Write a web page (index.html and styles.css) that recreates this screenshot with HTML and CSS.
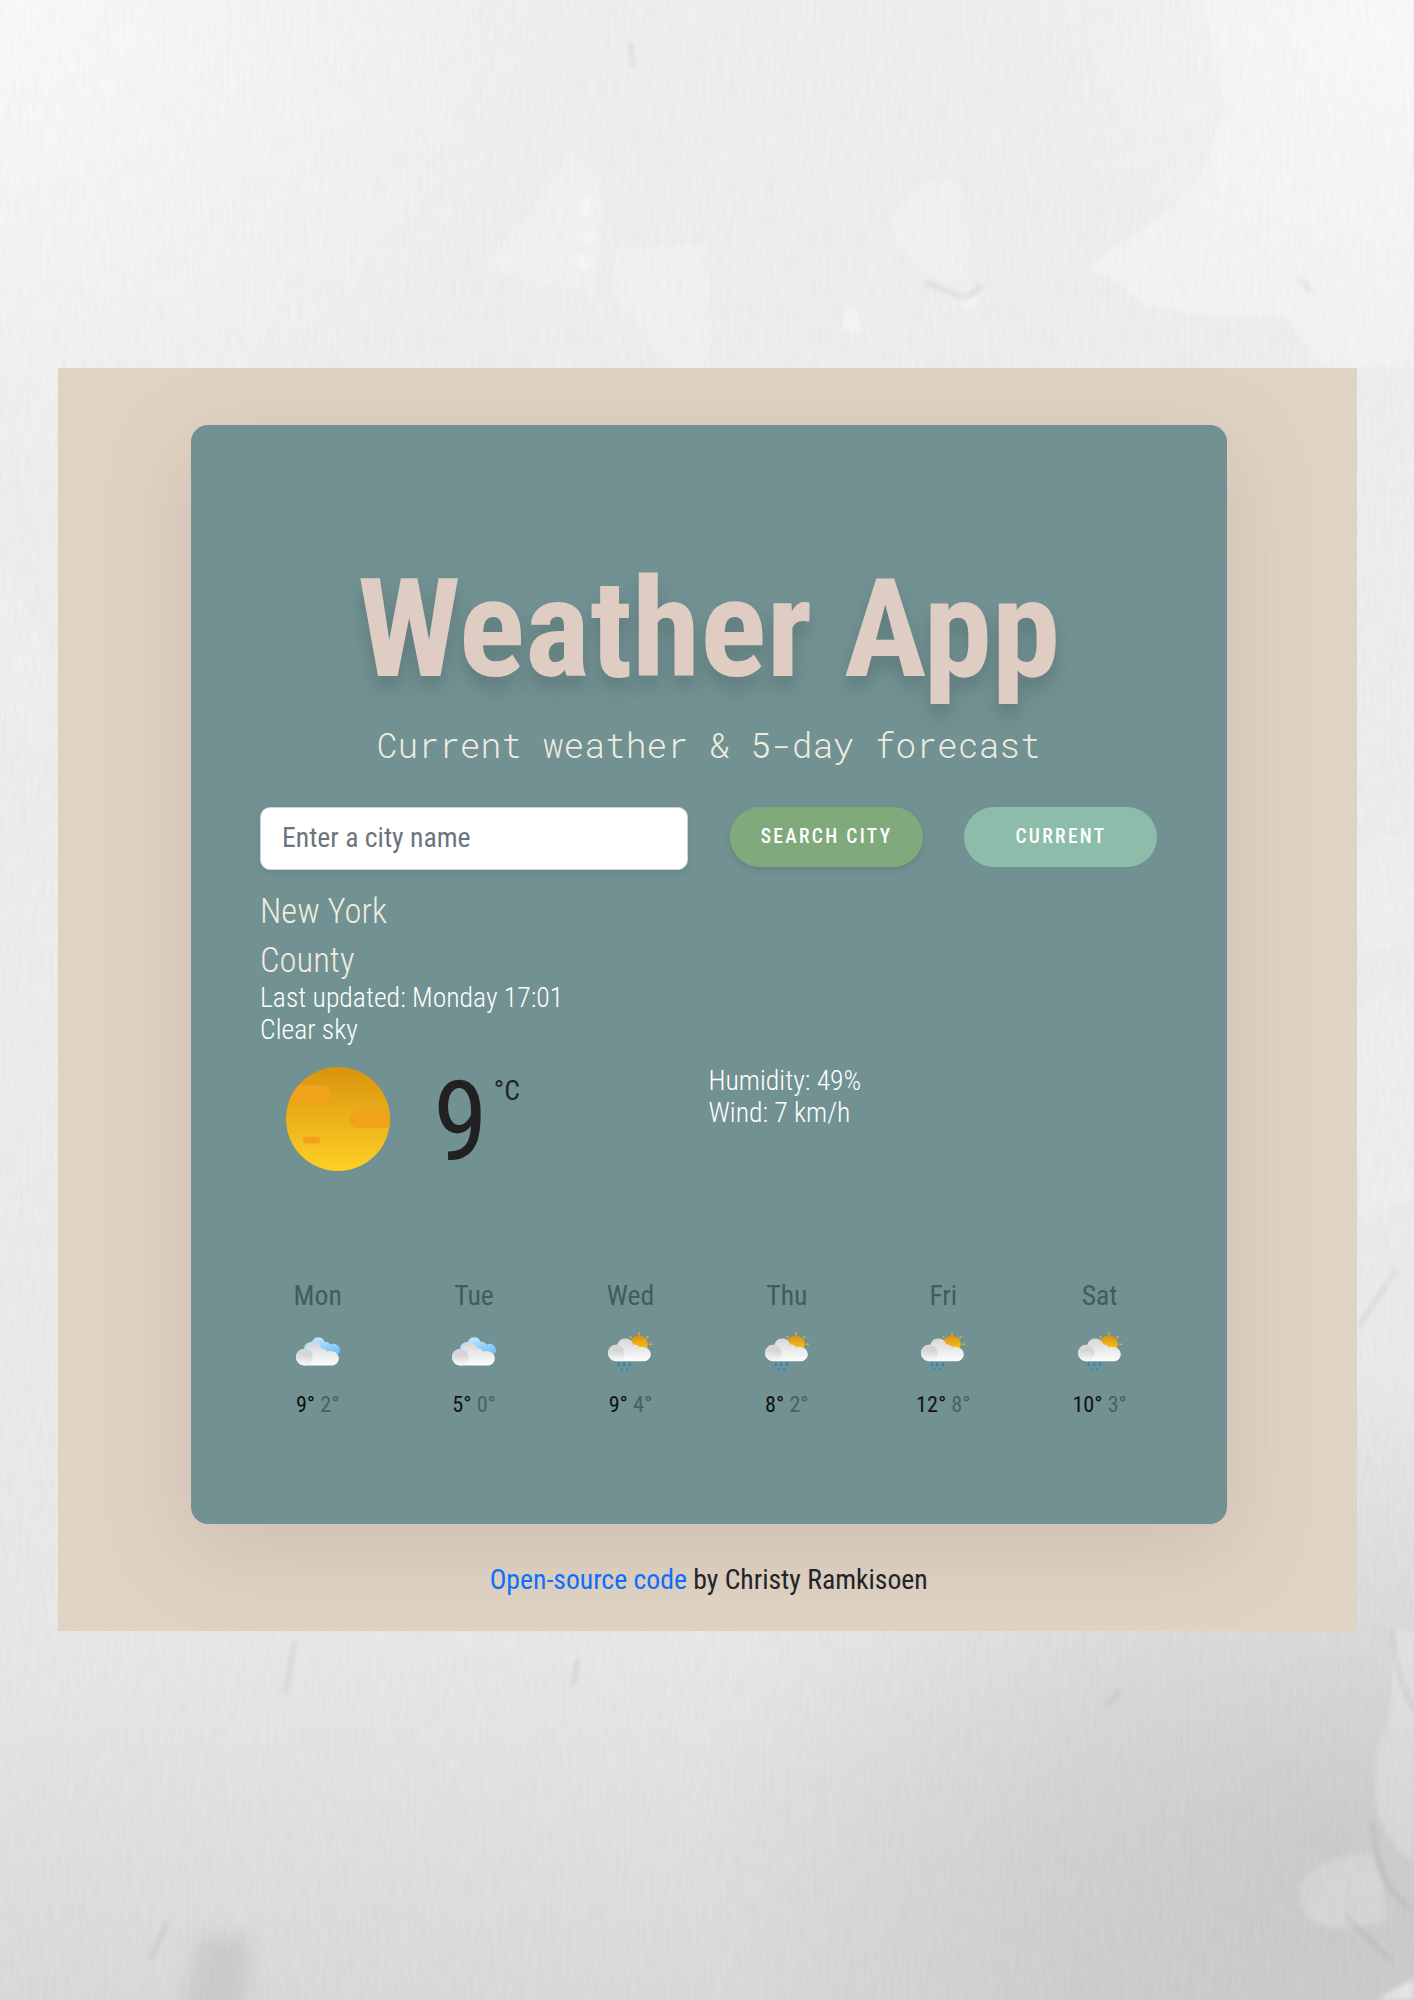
FILE: index.html
```html
<!DOCTYPE html>
<html lang="en">
<head>
<meta charset="utf-8">
<title>Weather App</title>
<link rel="stylesheet" href="styles.css">
</head>
<body>
<svg class="backdrop" viewBox="0 0 1414 2000" aria-hidden="true">
  <defs>
    <filter id="grain" x="0" y="0" width="1" height="1"><feTurbulence type="fractalNoise" baseFrequency=".3 .04" numOctaves="3" seed="4"/><feColorMatrix values="0 0 0 0 0  0 0 0 0 0  0 0 0 0 0  .035 0 0 0 -.010"/></filter>
    <filter id="soft" x="-.3" y="-.3" width="1.600" height="1.600"><feGaussianBlur stdDeviation="2.500"/></filter>
    <filter id="smudge" x="-1" y="-1" width="3" height="3"><feGaussianBlur stdDeviation="10"/></filter>
    <linearGradient id="sun" x1="0" y1="0" x2="0" y2="1"><stop offset="0" stop-color="#d8930f"/><stop offset="1" stop-color="#ffd026"/></linearGradient>
    <linearGradient id="cloud" x1="0" y1="0" x2="0" y2="1"><stop offset="0" stop-color="#d6d6d6"/><stop offset="1" stop-color="#fdfdfd"/></linearGradient>
    <linearGradient id="puff" x1="0" y1=".2" x2="1" y2=".5"><stop offset="0" stop-color="#d8d8d8"/><stop offset="1" stop-color="#d2d2d2"/></linearGradient>
    <linearGradient id="puffdown" x1="0" y1="0" x2="0" y2="1"><stop offset=".35" stop-color="#fafafa" stop-opacity="0"/><stop offset="1" stop-color="#fafafa"/></linearGradient>
    <linearGradient id="blue" x1=".3" y1="0" x2=".8" y2="1"><stop offset="0" stop-color="#c6e8fc"/><stop offset="1" stop-color="#66bdf6"/></linearGradient>
    <clipPath id="disc"><circle cx="52" cy="52" r="52"/></clipPath>
    <symbol id="front" viewBox="0 0 44 24">
      <path fill="url(#cloud)" d="M8.300 23a8.300 8.300 0 0 1 0-16.600h1.200A8 8 0 0 1 25.200 6.300q4-.9 6 2.600 3.500-.9 5.800.2a7 7 0 0 1-.9 13.900z"/>
      <circle cx="8.300" cy="14.700" r="8.300" fill="url(#puff)"/>
      <circle cx="8.300" cy="14.700" r="8.300" fill="url(#puffdown)"/>
    </symbol>
    <symbol id="clouds" viewBox="0 0 44 44">
      <path fill="url(#blue)" d="M8 18q-1-7 8-8.200 1.500-4.600 6.300-4.600t6.500 4.800q3.500-1 5.600 2.400a6 6 0 0 1 6 11.600z"/>
      <use href="#front" width="44" height="24" y="10.500"/>
    </symbol>
    <symbol id="rain" viewBox="0 0 44 44">
      <g stroke="#e8b11c" stroke-width="1.500"><path d="M31 .3v3M21.800 4.300l1.800 1.800M40.200 4.300l-1.800 1.800M41 12.300h3"/></g>
      <circle cx="31" cy="12.300" r="8.800" fill="url(#sun)"/>
      <use href="#front" width="44" height="24" y="6.300"/>
      <g stroke="#2488cd" stroke-width="2" stroke-linecap="round"><path d="M10.500 31.500v2M16.200 31.500v2M22 31.500v2M13.500 37v.4M19.100 37v.4"/></g>
    </symbol>
  </defs>
  <g filter="url(#soft)" fill="#fff">
    <path opacity=".3" d="M1202 0q18 50 22 100-5 40-25 75-25 40-75 65-20 15-40 30 30 5 60 35 60 15 140 10l40 53h90V0z"/>
    <path opacity=".18" d="M570 150q-30 60-94 115l45 15 75 16 8-100-4-22z"/>
    <path opacity=".35" d="M582 195q12 0 12 10t-8 14q-8-10-4-24zM575 232q16-4 20 4-4 8-10 10zM568 256q20-4 24 4-2 10-10 10z"/>
    <path opacity=".18" d="M920 180h40q8 50 14 90l-8 12q-30 0-50-15-20-20-28-45zM610 250q50-10 100-5v123h-40q-30-40-58-75z"/>
    <path opacity=".45" d="M845 305q18 10 16 28-18 0-18-8zM960 298q20-8 20 2-10 10-18 8z"/>
    <path opacity=".15" d="M1356 850q30-25 58-10v100q-30 10-58 10zM1356 1010q30-30 58 0v190l-58 20zM0 560l35 60 20 70-20 60-35-40z"/>
    <path opacity=".2" d="M1300 1885q20-30 72-32 14 30 14 68-20 6-50 8-40-5-36-44z"/>
    <path opacity=".5" d="M1376 2000l38-22v22z"/>
    <path opacity=".22" d="M1394 1630h20v230q-30-10-38-60-4-50 14-80z"/>
  </g>
  <g filter="url(#soft)" stroke="#000" fill="none" opacity=".09" stroke-width="3">
    <path d="M631 42l2 25M925 282l42 17 16-14M1298 278l15 14M295 1640l-10 55M578 1660l-5 26M1120 1690l-14 16M1392 1630q4 45 22 80M1372 1820q5 70 42 90M1345 1915l45 45M168 1920l-18 40M1358 1328l38-58"/>
  </g>
  <g filter="url(#smudge)"><path opacity=".07" d="M200 1935h52l-8 80h-62z"/></g>
  <rect width="1414" height="2000" filter="url(#grain)"/>
</svg>
<main class="panel">
  <section class="card">
    <h1 class="title">Weather App</h1>
    <h2 class="subtitle">Current weather &amp; 5-day forecast</h2>
    <form class="search">
      <input class="city-input" type="text" placeholder="Enter a city name">
      <button class="btn btn-search" type="button">Search city</button>
      <button class="btn btn-current" type="button">Current</button>
    </form>
    <h3 class="city">New York County</h3>
    <p class="info updated">Last updated: Monday 17:01<br>Clear sky</p>
    <div class="now">
      <div class="temperature">
        <svg class="sun" viewBox="0 0 104 104"><g clip-path="url(#disc)"><rect width="104" height="104" fill="url(#sun)"/><g fill="#f0a31a"><rect x="-10" y="18" width="55" height="17" rx="8"/><rect x="64" y="44" width="60" height="17" rx="7"/><rect x="17" y="69.500" width="17.500" height="7" rx="3.500"/></g></g></svg>
        <span class="degrees">9</span><span class="unit">°C</span>
      </div>
      <p class="info">Humidity: 49%<br>Wind: 7 km/h</p>
    </div>
    <div class="forecast">
      <div class="day"><div class="name">Mon</div><svg class="icon"><use href="#clouds"/></svg><div class="temps"><b>9°</b> <i>2°</i></div></div>
      <div class="day"><div class="name">Tue</div><svg class="icon"><use href="#clouds"/></svg><div class="temps"><b>5°</b> <i>0°</i></div></div>
      <div class="day"><div class="name">Wed</div><svg class="icon"><use href="#rain"/></svg><div class="temps"><b>9°</b> <i>4°</i></div></div>
      <div class="day"><div class="name">Thu</div><svg class="icon"><use href="#rain"/></svg><div class="temps"><b>8°</b> <i>2°</i></div></div>
      <div class="day"><div class="name">Fri</div><svg class="icon"><use href="#rain"/></svg><div class="temps"><b>12°</b> <i>8°</i></div></div>
      <div class="day"><div class="name">Sat</div><svg class="icon"><use href="#rain"/></svg><div class="temps"><b>10°</b> <i>3°</i></div></div>
    </div>
  </section>
  <footer class="footer"><a href="#">Open-source code</a> by Christy Ramkisoen</footer>
</main>
</body>
</html>
```

FILE: styles.css
```css
* { box-sizing: border-box; margin: 0; }
body {
  position: relative;
  min-height: 2000px;
  padding: 368px 57.500px 0;
  font: 400 27.7px/32.4px "Roboto Condensed", Roboto, sans-serif;
  font-stretch: 75%;
  color: #212529;
  background:
    radial-gradient(ellipse 640px 480px at 94% 92%, rgba(0,0,0,.09), rgba(0,0,0,.06) 45%, transparent),
    radial-gradient(ellipse 560px 500px at 0 0, rgba(255,255,255,.65), transparent),
    radial-gradient(ellipse 400px 360px at 100% 0, rgba(255,255,255,.5), transparent),
    linear-gradient(#efefef 0, #ededed 50%, #e8e8e8 82%, #dadada 100%);
}
.backdrop { position: absolute; left: 0; top: 0; width: 1414px; height: 2000px; }
.panel { position: relative; height: 1263px; padding: 57px 130px 0 133.500px; background: #dfd3c3; overflow: hidden; }
.card { height: 1099px; padding: 124px 69px 0; border-radius: 17px; background: #719192; box-shadow: 0 24px 90px rgba(147,112,112,.22); }
.title { height: 162px; font-size: 138.200px; line-height: 161px; font-weight: 700; text-align: center; color: #dfccc3; text-shadow: 0 12px 18px rgba(0,0,0,.15); white-space: nowrap; }
.subtitle { height: 50px; margin-top: 9px; font: 300 34.600px/50px "Roboto Mono", "Liberation Mono", monospace; text-align: center; color: #f0ebdf; white-space: nowrap; }
.search { display: grid; grid-template-columns: 428px 193px 193px; column-gap: 41.500px; margin-top: 37px; height: 63px; }
.city-input { height: 63px; padding: 0 21px 2px; border: 1px solid #ced4da; border-radius: 10px; font: inherit; font-stretch: 75%; box-shadow: 0 3px 6px rgba(0,0,0,.08); }
.city-input::placeholder { color: #6c757d; opacity: 1; }
.btn { height: 60px; border: 0; border-radius: 30px; padding: 0 0 1px 1px; font: 500 19.400px/28px "Roboto Condensed", Roboto, sans-serif; font-stretch: 75%; letter-spacing: 2.350px; text-transform: uppercase; color: #fff; white-space: nowrap; }
.btn-search { background: #80aa7c; box-shadow: 0 3px 6px rgba(0,0,0,.1); }
.btn-current { background: #8dbcaa; }
.city { width: 150px; margin-top: 17px; font-size: 34.600px; line-height: 48.600px; font-weight: 300; color: #f0ebdf; }
.info { font-weight: 300; color: #fff; }
.updated { margin-top: -2.500px; }
.now { display: grid; grid-template-columns: 448.500px 1fr; margin-top: 18.500px; height: 120px; }
.temperature { display: flex; align-items: flex-start; }
.sun { width: 104px; height: 104px; margin: 2px 43px 0 26px; }
.degrees { margin-top: 2px; font-size: 111px; line-height: 110px; color: #212121; }
.unit { margin: 10px 0 0 6px; }
.forecast { display: grid; grid-template-columns: repeat(6, 156.400px); margin: 95px -21px 0 -20.500px; text-align: center; }
.name { color: #435c5c; }
.icon { display: block; width: 44px; height: 44px; margin: 20px auto 15px; }
.temps { font-size: 22.200px; line-height: 26px; }
.temps b { font-weight: 400; color: #111; }
.temps i { font-style: normal; color: #496161; }
.footer { padding-top: 40px; text-align: center; }
.footer a { color: #0d6efd; text-decoration: none; }
```
